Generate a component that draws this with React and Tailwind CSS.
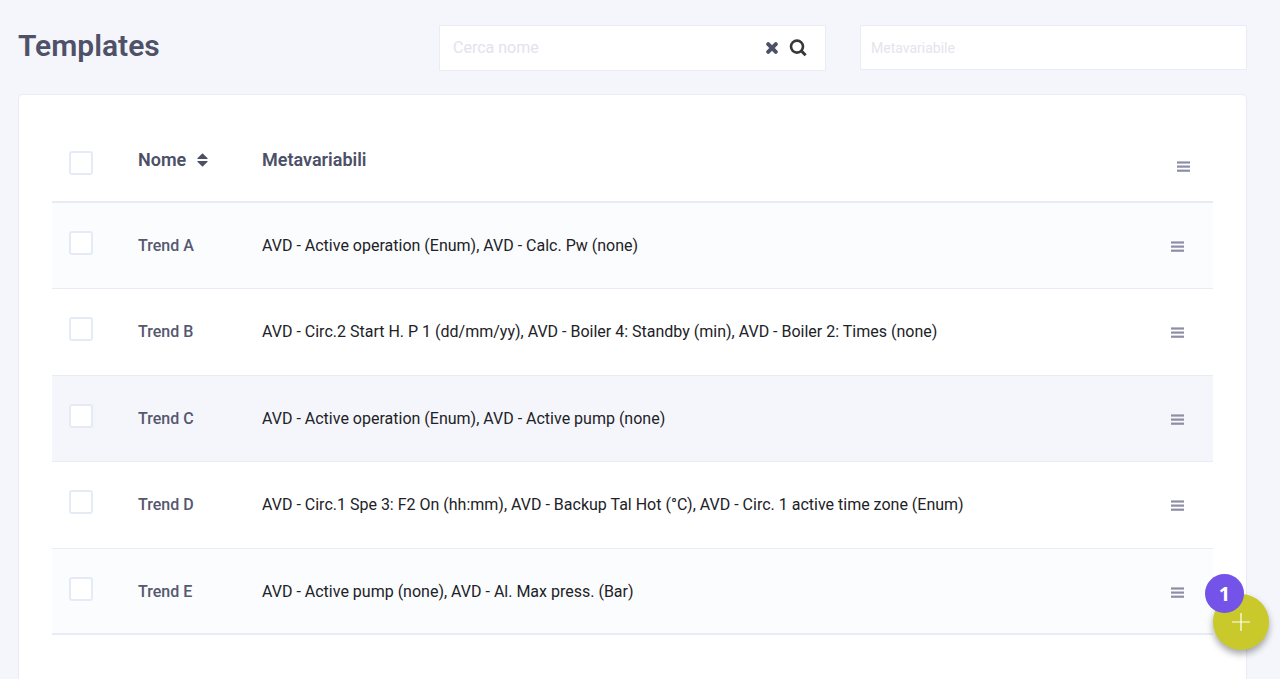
import React, { useState } from "react";

const rows = [
  { name: "Trend A", meta: "AVD - Active operation (Enum), AVD - Calc. Pw (none)" },
  { name: "Trend B", meta: "AVD - Circ.2 Start H. P 1 (dd/mm/yy), AVD - Boiler 4: Standby (min), AVD - Boiler 2: Times (none)" },
  { name: "Trend C", meta: "AVD - Active operation (Enum), AVD - Active pump (none)", active: true },
  { name: "Trend D", meta: "AVD - Circ.1 Spe 3: F2 On (hh:mm), AVD - Backup Tal Hot (°C), AVD - Circ. 1 active time zone (Enum)" },
  { name: "Trend E", meta: "AVD - Active pump (none), AVD - Al. Max press. (Bar)" },
];

function MenuIcon() {
  return (
    <svg className="block h-3 w-[13px]" viewBox="0 0 13 12" fill="#8d8ea6" aria-hidden="true">
      <rect y="0.4" width="13" height="2.2" />
      <rect y="4.5" width="13" height="2.2" />
      <rect y="8.6" width="13" height="2.2" />
    </svg>
  );
}

function Tick({ label }) {
  return (
    <input
      type="checkbox"
      aria-label={label}
      className="block size-6 appearance-none rounded-[3px] border-2 border-[#e5ebf6] bg-white checked:bg-[#7453e8]"
    />
  );
}

function SearchBar({ name, setName }) {
  return (
    <div className="flex h-[46px] items-center border border-[#e8ecf6] bg-white pl-[13px] pr-[18px]">
      <input
        type="text"
        aria-label="Cerca nome"
        placeholder="Cerca nome"
        value={name}
        onChange={(e) => setName(e.target.value)}
        className="min-w-0 flex-1 bg-transparent text-base outline-none placeholder:text-[#e2e3ec]"
      />
      <button type="button" aria-label="Cancella" onClick={() => setName("")} className="mr-[11px]">
        <svg className="block size-3" viewBox="0 0 12 12" aria-hidden="true">
          <path d="M2.2 2.2L9.8 9.8M9.8 2.2L2.2 9.8" stroke="#4e5168" strokeWidth="4" strokeLinecap="round" />
        </svg>
      </button>
      <button type="button" aria-label="Cerca">
        <svg className="block size-[18px]" viewBox="0 0 18 18" fill="none" stroke="#373739" aria-hidden="true">
          <circle cx="8" cy="7.6" r="6" strokeWidth="2.6" />
          <path d="M12.2 11.8L16.6 16.2" strokeWidth="3" />
        </svg>
      </button>
    </div>
  );
}

function TemplatesTable() {
  return (
    <table className="w-full border-separate border-spacing-0 text-left">
      <thead>
        <tr className="h-[88px] align-top text-lg text-[#4c5066] [&>th]:border-b-2 [&>th]:border-[#e7ebf5]">
          <th className="w-[86px] pl-[17px] pt-9">
            <Tick label="Seleziona tutti" />
          </th>
          <th className="w-[124px] pt-[31px] font-semibold">
            <button type="button" className="flex items-center gap-[11px]">
              Nome
              <svg className="h-3.5 w-[11px]" viewBox="0 0 11 14" fill="#4c5066" aria-hidden="true">
                <path d="M5.5 0.3L10.6 5.3Q11 6 10.2 6H0.8Q0 6 0.4 5.3ZM5.5 13.7L10.6 8.7Q11 8 10.2 8H0.8Q0 8 0.4 8.7Z" />
              </svg>
            </button>
          </th>
          <th className="pt-[31px] font-semibold">Metavariabili</th>
          <th className="w-[48px] pl-3 pt-[46px]">
            <button type="button" aria-label="Azioni" className="block">
              <MenuIcon />
            </button>
          </th>
        </tr>
      </thead>
      <tbody>
        {rows.map((row) => (
          <tr
            key={row.name}
            className={
              "align-top odd:h-[86px] even:h-[87px] last:h-[87px] [&>td]:border-b [&>td]:border-[#e8ecf4] last:[&>td]:border-b-2 last:[&>td]:border-[#e7ebf5] " +
              (row.active ? "bg-[#f5f6fb]" : "odd:bg-[#fbfcfe]")
            }
          >
            <td className="pl-[17px] pt-7">
              <Tick label={"Seleziona " + row.name} />
            </td>
            <td className="pt-[31px] text-base font-medium text-[#555870]">{row.name}</td>
            <td className="pt-[31px] text-base text-[#212227]">{row.meta}</td>
            <td className="pl-[6px] pt-[38px]">
              <button type="button" aria-label={"Azioni " + row.name} className="block">
                <MenuIcon />
              </button>
            </td>
          </tr>
        ))}
      </tbody>
    </table>
  );
}

export default function App() {
  const [name, setName] = useState("");
  return (
    <div className="flex h-screen flex-col overflow-hidden bg-[#f5f6fb] pl-[18px] pr-[33px] font-['Roboto','Liberation_Sans',sans-serif]">
      <header className="grid shrink-0 grid-cols-[1fr_1fr_1fr] items-start gap-[34px] pb-[23px] pt-[25px]">
        <h1 className="text-3xl font-semibold leading-[42px] text-[#4e5168]">Templates</h1>
        <SearchBar name={name} setName={setName} />
        <input
          type="text"
          aria-label="Metavariabile"
          placeholder="Metavariabile"
          className="h-[45px] w-full min-w-0 rounded-[2px] border border-[#e8ecf6] bg-white px-2.5 text-sm outline-none placeholder:text-[#e4e5ed]"
        />
      </header>
      <main className="flex-1 rounded-t-[5px] border border-b-0 border-[#e8ecf6] bg-white px-[33px] pt-5">
        <TemplatesTable />
      </main>
      <button
        type="button"
        aria-label="Aggiungi template"
        className="fixed bottom-[29px] right-[11px] flex size-[56px] items-center justify-center rounded-full bg-[#cac92b] shadow-[0_4px_7px_rgba(0,0,0,0.35)]"
      >
        <svg className="size-[18px]" viewBox="0 0 18 18" stroke="#fff" strokeWidth="1.2" aria-hidden="true">
          <path d="M9 0V18M0 9H18" />
        </svg>
      </button>
      <span className="fixed bottom-[66px] right-[36px] flex size-[39px] items-center justify-center rounded-full bg-[#7453e8] font-['Noto_Sans',sans-serif] text-xl font-bold text-white">
        1
      </span>
    </div>
  );
}
